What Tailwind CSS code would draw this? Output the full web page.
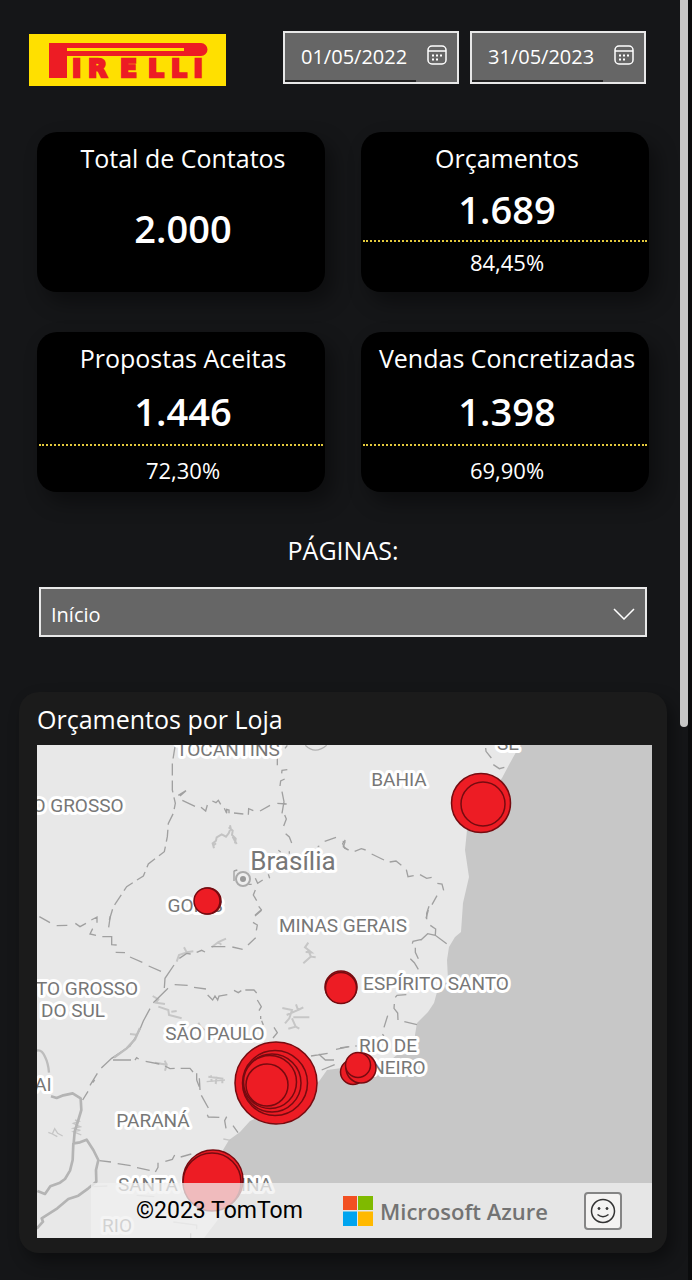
<!DOCTYPE html>
<html lang="pt-BR">
<head>
<meta charset="utf-8">
<meta name="viewport" content="width=device-width, initial-scale=1">
<title>Pirelli - Orçamentos</title>
<script src="https://cdn.jsdelivr.net/npm/@tailwindcss/browser@4"></script>
</head>
<body class="relative min-h-screen bg-[#151618] font-['Open_Sans','Noto_Sans',sans-serif] text-white">
<div class="absolute inset-y-0 right-0 w-1 bg-[#0b0c0d]"></div>
<div class="absolute top-0 right-1 h-[727px] w-2 rounded-b-full bg-[#c6c6c6]"></div>

<header class="flex items-start justify-between pt-[31px] pr-[46px] pl-[29px]">
  <svg class="mt-[3px] h-[52px] w-[197px]" viewBox="0 0 197 52" role="img" aria-label="Pirelli">
    <rect width="197" height="52" fill="#ffe000"/>
    <path d="M20 9H172a6.500 6.500 0 0 1 0 13H38V44H20Z" fill="#ed1c24"/>
    <rect x="38" y="14" width="117" height="3" fill="#ffe000"/>
    <text y="43" x="43 59 91 119 142 164.500" font-family="DejaVu Sans" font-weight="700" font-size="25" fill="#ed1c24" stroke="#ed1c24" stroke-width="2.500">IRELLI</text>
  </svg>
  <div class="flex gap-[11px]">
    <div class="flex h-[53px] w-44 border-2 border-[#e8e8e8] bg-[#666]">
      <input aria-label="Data inicial" type="text" value="01/05/2022" class="w-[131px] border-b-2 border-[#222] pl-4 text-xl outline-none">
      <button type="button" aria-label="Abrir calendário da data inicial" class="mt-3 ml-[11px] size-5">
        <svg class="size-5" viewBox="0 0 20 20" fill="none" stroke="#fff" stroke-width="1.500"><rect x="1" y="1" width="18" height="18" rx="4"/><path d="M1 6H19"/><path d="M5 10.500h2m2 0h2m2 0h2M5 14.500h2m2 0h2" stroke-width="2"/></svg>
      </button>
    </div>
    <div class="flex h-[53px] w-44 border-2 border-[#e8e8e8] bg-[#666]">
      <input aria-label="Data final" type="text" value="31/05/2023" class="w-[131px] border-b-2 border-[#222] pl-4 text-xl outline-none">
      <button type="button" aria-label="Abrir calendário da data final" class="mt-3 ml-[11px] size-5">
        <svg class="size-5" viewBox="0 0 20 20" fill="none" stroke="#fff" stroke-width="1.500"><rect x="1" y="1" width="18" height="18" rx="4"/><path d="M1 6H19"/><path d="M5 10.500h2m2 0h2m2 0h2M5 14.500h2m2 0h2" stroke-width="2"/></svg>
      </button>
    </div>
  </div>
</header>

<main>
  <section class="mt-[46px] grid grid-cols-2 gap-x-9 gap-y-10 pr-[43px] pl-[37px] text-center whitespace-nowrap">
    <article class="h-40 rounded-[20px] bg-black pt-2 shadow-[8px_10px_20px_rgba(0,0,0,0.4)]">
      <h2 class="pl-1 text-[25px] leading-9">Total de Contatos</h2>
      <p class="mt-[26px] pl-1 text-[38px] leading-[52px] font-semibold">2.000</p>
    </article>
    <article class="h-40 rounded-[20px] bg-black pt-2 shadow-[8px_10px_20px_rgba(0,0,0,0.4)]">
      <h2 class="pl-1 text-[25px] leading-9">Orçamentos</h2>
      <p class="mt-[7px] pl-1 text-[38px] leading-[52px] font-semibold">1.689</p>
      <div class="mx-[2px] mt-[5px] border-t-2 border-dotted border-[#e3c93c]"></div>
      <p class="mt-1 pl-1 text-[22px] leading-8">84,45%</p>
    </article>
    <article class="h-40 rounded-[20px] bg-black pt-2 shadow-[8px_10px_20px_rgba(0,0,0,0.4)]">
      <h2 class="pl-1 text-[25px] leading-9">Propostas Aceitas</h2>
      <p class="mt-[9px] pl-1 text-[38px] leading-[52px] font-semibold">1.446</p>
      <div class="mx-[2px] mt-[7px] border-t-2 border-dotted border-[#e3c93c]"></div>
      <p class="mt-2 pl-1 text-[22px] leading-8">72,30%</p>
    </article>
    <article class="h-40 rounded-[20px] bg-black pt-2 shadow-[8px_10px_20px_rgba(0,0,0,0.4)]">
      <h2 class="pl-1 text-[25px] leading-9">Vendas Concretizadas</h2>
      <p class="mt-[9px] pl-1 text-[38px] leading-[52px] font-semibold">1.398</p>
      <div class="mx-[2px] mt-[7px] border-t-2 border-dotted border-[#e3c93c]"></div>
      <p class="mt-2 pl-1 text-[22px] leading-8">69,90%</p>
    </article>
  </section>

  <section class="mt-10 pr-[45px] pl-[39px]">
    <label for="paginas" class="block text-center text-[25px] leading-9">PÁGINAS:</label>
    <div class="relative mt-[19px]">
      <select id="paginas" class="block h-[50px] w-full appearance-none border-2 border-[#e8e8e8] bg-[#666] pt-[6px] pl-[10px] text-xl outline-none"><option>Início</option></select>
      <svg class="pointer-events-none absolute top-[21px] right-3 h-3 w-[22px]" viewBox="0 0 22 12" fill="none" stroke="#fff" stroke-width="1.500"><path d="M1 1L11 11L21 1"/></svg>
    </div>
  </section>

  <section class="mt-[55px] mr-[25px] mb-[27px] ml-[19px] rounded-[20px] bg-[#1b1b1b] pt-[9px] pr-[15px] pb-[15px] pl-[18px] shadow-[6px_8px_16px_rgba(0,0,0,0.4)]">
    <h2 class="text-[25px] leading-9">Orçamentos por Loja</h2>
    <div class="relative mt-2">
      <svg class="block h-auto w-full" viewBox="37 745 615 493" role="img" aria-label="Mapa de orçamentos por loja">
        <rect x="37" y="745" width="615" height="493" fill="#e8e8e8"/>
        <path fill="#c7c7c7" d="M520 745L510 763L502 778L490 795L467 830L465 850L469 877L463 903L461 932L455 937L449 947L447 960L448 980L437 992L434 1003L428 1012L417 1023L415 1035L417 1053L397 1055L385 1064L350 1067L327 1070L320 1080L300 1100L270 1112L250 1121L240 1132L229 1140L223 1150L226 1177L229 1195L223 1213L210 1230L204 1238H652V745Z"/>
        <!-- state borders, upper left -->
        <g transform="translate(30 740) scale(.33333)" fill="none" stroke="#a0a0a0" stroke-width="4">
          <path stroke-dasharray="36 15" d="M435 20L427 70V150L436 190L430 220L415 250L412 290L403 335L355 372L340 408L290 440L250 500L238 540"/>
          <path d="M445 166L468 152L450 168M457 181L495 199M513 202L527 213L532 195M547 183L558 188L565 181L572 193M583 205L590 220V208L597 210V220M612 219L640 222M655 224L656 206L670 212M690 213L720 196M742 190L770 192M742 52V76M765 25L772 16M772 89L756 91L755 100M764 117L752 123L750 138M756 155L762 185L756 220M764 225L769 237L761 258M767 281L778 291L785 309M884 304L918 292M946 300L938 311L944 325L956 330M745 331L752 336M863 320L868 318M778 334V341M715 403L719 415M676 415L683 430L698 420M655 433H665M676 450L670 465L680 482M686 499L694 509L675 526M612 392V423M612 393L622 390"/>
          <path stroke="#b2b2b2" d="M826 16Q855 45 890 16"/>
          <path stroke="#c3c3c3" stroke-width="6" d="M552 325L548 310L558 302L560 292L575 283L588 290L596 280L602 265L600 256M596 262L608 272L606 285L617 296L615 310M548 318L558 310M608 290L620 312"/>
        </g>
        <!-- state borders, upper right -->
        <g transform="translate(340 740) scale(.33333)" fill="none" stroke="#a0a0a0" stroke-width="4">
          <path d="M437 24L438 34L454 54M460 74L478 86L493 82M8 304L15 306L10 320L25 330M44 334L64 326L77 330M95 342L132 360M149 366L168 363L184 376M199 389L204 410L221 407M240 404L260 415L275 412M292 430L306 432L311 451M291 467L276 494M267 499L260 520V538"/>
        </g>
        <!-- state borders and rivers, middle left -->
        <g transform="translate(30 910) scale(.33333)" fill="none" stroke="#a0a0a0" stroke-width="4">
          <path stroke="#c6c6c6" stroke-width="6" d="M440 155L447 135L470 127L462 112M470 127L490 124M545 112L565 96L588 86M565 96L574 104M368 258L385 268L378 278L405 282M385 290L415 300L417 315L455 325M424 305L440 303M505 338L512 350L524 360M300 372L320 374M375 458L410 464L405 482M410 464L404 452M535 500L580 506M543 496L545 515M560 500L557 522M577 510V520M835 98L825 112L844 127L827 126M834 120L843 140L857 142M842 140L820 160M757 294L786 300L778 325L765 340M770 315L804 300L798 283M790 322H838M804 300L820 292M786 325L797 350L775 356M797 350L808 356"/>
          <path d="M28 20L60 38M80 47L112 46M136 40L150 50L168 40M184 30L201 21V38M241 18L236 52M188 56L180 72L198 76M217 80H245V104L260 105M257 127L285 128M300 141L337 157M356 168L393 184M448 145L470 130L482 132M500 127L515 121L525 126M544 110H586M607 111L638 118M654 105L677 83M669 37L682 45L679 61M675 18L695 1M432 165L405 205L403 234M414 235L370 278M360 296L340 333L330 358L315 384L300 408L245 445L214 474M202 490L180 526M434 224L473 226M492 232L528 237M533 255L548 270L555 258L563 270L567 258L592 254M612 241L625 248L634 242M646 240H672L680 249M682 270L694 290L687 302M692 318V327M695 332L700 345M732 352L742 368L729 384M249 450H303M315 450L320 443L326 447M347 454L388 462M405 468L420 476L434 475M452 475H480L489 486M500 490V510M508 505L510 540M843 438L893 430M866 432L886 450H912M918 418L958 410M875 480L914 464"/>
          <path stroke="#bdbdbd" stroke-width="7" d="M20 422Q35 417 45 440Q55 460 57 488M330 354L315 388L290 415L252 443"/>
        </g>
        <!-- state borders, middle right -->
        <g transform="translate(340 910) scale(.33333)" fill="none" stroke="#a0a0a0" stroke-width="4">
          <path d="M265 0L258 25M271 46L287 57L286 76M242 91L263 71L286 76L320 101M217 101L219 94L245 88M226 113V127L235 146M211 146L223 158L235 178M166 262L171 256L199 254M163 282L162 295L173 309L174 330M143 317L132 352M193 335L231 344M127 373L132 377M46 408H50M0 414L26 410"/>
        </g>
        <!-- borders and rivers, lower left -->
        <g transform="translate(10 1080) scale(.33333)" fill="none" stroke="#a0a0a0" stroke-width="4">
          <path stroke="#c6c6c6" d="M195 120L207 124L190 130L211 140L190 145L211 151L190 155L214 165M115 157L127 162L134 146L143 160L158 168M127 162L142 170M640 177L662 181M590 5L645 0M250 320L292 318M380 346L433 350M490 426L560 435V448"/>
          <path d="M254 0L248 8M234 34L218 60M268 242L303 246M323 251L362 257M381 263L419 271M436 276L444 262V248M466 244L487 238L494 225M512 231L544 222M560 0L568 20M574 46L595 84M592 104L595 111L628 112M650 110L644 122L648 145M669 137L684 158M542 460V474"/>
          <path stroke="#b4b4b4" stroke-width="8" stroke-linejoin="round" d="M123 49L140 54L160 46L188 40L212 55L214 90L205 120L194 155L191 190L210 187L230 179L250 210L265 240L258 270L259 305L235 325L205 347L175 357L142 385L95 415L99 425L80 446M190 190L188 240L180 272L165 297L150 308L121 319L105 342L82 333"/>
        </g>
        <g fill="#777" stroke="#fff" stroke-width="6" stroke-linejoin="round" paint-order="stroke" text-anchor="middle" font-family="Roboto" font-size="19">
          <text x="228" y="756">TOCANTINS</text>
          <text x="508" y="750">SE</text>
          <text x="399" y="786">BAHIA</text>
          <text x="78" y="812">O GROSSO</text>
          <text x="195" y="912">GOIÁS</text>
          <text x="343" y="932">MINAS GERAIS</text>
          <text x="436" y="990">ESPÍRITO SANTO</text>
          <text x="87" y="995">TO GROSSO</text>
          <text x="73" y="1017">DO SUL</text>
          <text x="215" y="1040">SÃO PAULO</text>
          <text x="388" y="1052">RIO DE</text>
          <text x="387" y="1074">JANEIRO</text>
          <text x="43" y="1091">AI</text>
          <text x="153" y="1127">PARANÁ</text>
          <text x="195" y="1191">SANTA CATARINA</text>
          <text x="117" y="1232">RIO</text>
          <text x="293" y="870" font-size="26">Brasília</text>
        </g>
        <circle cx="243" cy="879" r="7" fill="#eee" stroke="#aaa" stroke-width="2"/><circle cx="243" cy="879" r="3" fill="#999"/>
        <g fill="#ed1c24" stroke="#760b10" stroke-width="1.500">
          <circle cx="481" cy="803" r="29.500"/><circle cx="483" cy="804" r="22"/>
          <circle cx="208" cy="901" r="13"/><circle cx="207" cy="901" r="13"/>
          <circle cx="341" cy="987" r="16"/><circle cx="341" cy="988" r="15.500"/>
          <circle cx="276" cy="1083" r="41"/><circle cx="275" cy="1083" r="32.500"/><circle cx="272" cy="1083" r="29"/><circle cx="270" cy="1082" r="26.500"/><circle cx="267" cy="1085" r="21"/>
          <circle cx="353" cy="1072" r="12.500"/><circle cx="361" cy="1068" r="15"/><circle cx="358" cy="1065" r="12.500"/>
          <circle cx="213" cy="1180" r="30"/><circle cx="212" cy="1182" r="29"/>
        </g>
      </svg>
      <footer class="absolute right-0 bottom-0 left-[54px] flex h-[55px] items-center bg-[#f0f0f0]/75 pr-[30px] pl-[45px] whitespace-nowrap">
        <span class="font-[Roboto,sans-serif] text-[23px] leading-8 text-black">©2023 TomTom</span>
        <svg class="ml-auto size-[30px] shrink-0" viewBox="0 0 30 30"><path fill="#f25022" d="M0 0h14v14H0z"/><path fill="#7fba00" d="M15 0h15v14H15z"/><path fill="#00a4ef" d="M0 15.500h14V30H0z"/><path fill="#ffb900" d="M15 15.500h15V30H15z"/></svg>
        <span class="ml-[7px] text-[22px] leading-8 font-semibold text-[#737373]">Microsoft Azure</span>
        <button type="button" aria-label="Enviar comentários" class="ml-9 flex size-[38px] shrink-0 items-center justify-center rounded-sm border-2 border-[#858585] bg-[#f4f3f2]">
          <svg class="size-[26px] shrink-0" viewBox="0 0 26 26" fill="none" stroke="#333" stroke-width="1.500"><circle cx="13" cy="13" r="11.500"/><path d="M7.500 16.500Q13 21 18.500 16.500"/><circle cx="9" cy="10.500" r="1" fill="#333" stroke-width="1"/><circle cx="17" cy="10.500" r="1" fill="#333" stroke-width="1"/></svg>
        </button>
      </footer>
    </div>
  </section>
</main>
</body>
</html>
